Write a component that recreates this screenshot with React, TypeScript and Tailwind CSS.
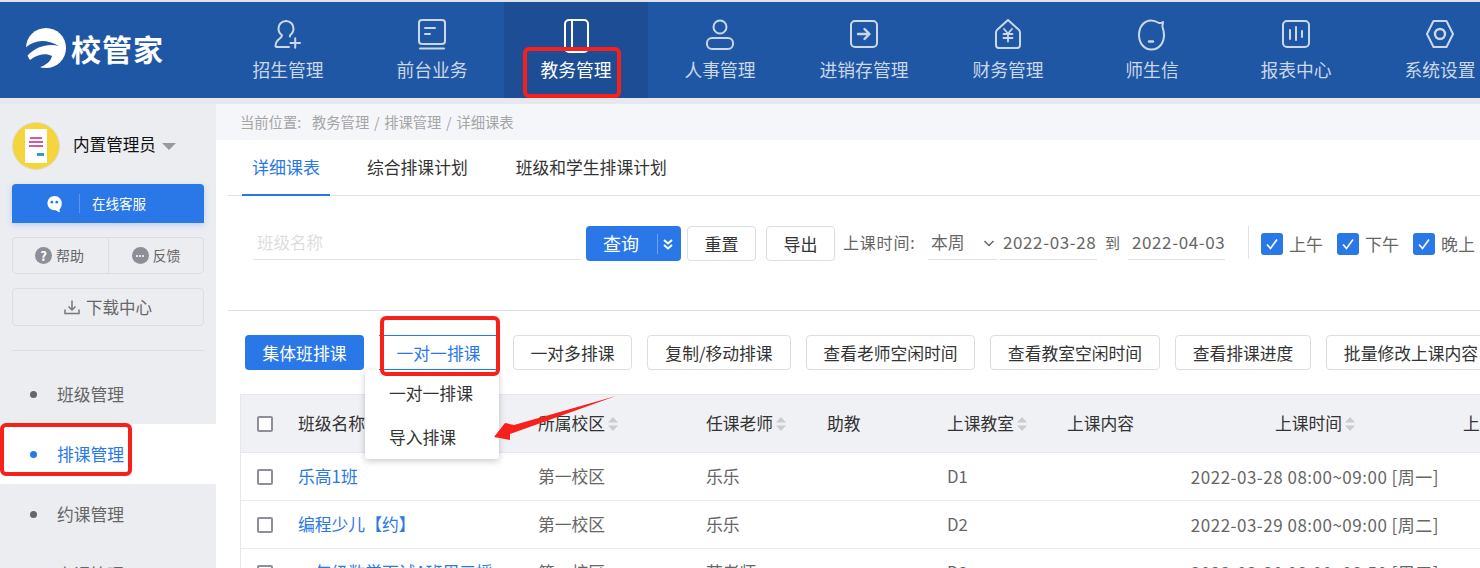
import React from "react";

const FONT = "[font-family:'Noto_Sans_CJK_SC','Noto_Sans',sans-serif]";

const stroke = { fill: "none", stroke: "currentColor", strokeWidth: 2, strokeLinecap: "round" as const, strokeLinejoin: "round" as const };

function NavIcon({ k }: { k: string }) {
  const body: Record<string, React.ReactNode> = {
    enroll: (
      <>
        <path d="M14 3c4.500 0 7.500 3.400 7.500 7.500 0 3-1.500 5.300-3.500 6.800v1.200" />
        <path d="M14 3c-4.500 0-7.500 3.400-7.500 7.500 0 3.300 1.700 5.500 3.500 6.800 0 2-2 2.700-4 4.700-1.300 1.300-2.500 3-2.500 5.500 0 1 .5 1.500 1.500 1.500H17" />
        <path d="M18.500 25h9.500M23.200 20.300v9.500" />
      </>
    ),
    front: (
      <>
        <rect x="3" y="2" width="26" height="24" rx="3" />
        <path d="M9 10h10M9 16h5M4 30.500h24" />
      </>
    ),
    edu: (
      <>
        <rect x="5" y="2" width="23" height="32" rx="4" />
        <path d="M12 2v32" />
      </>
    ),
    hr: (
      <>
        <circle cx="16" cy="9" r="6.500" />
        <rect x="3" y="20" width="26" height="11" rx="5" />
      </>
    ),
    stock: (
      <>
        <rect x="3" y="3" width="26" height="26" rx="4" />
        <path d="M10 16h11M16.500 11l5 5-5 5" strokeWidth="2.400" />
      </>
    ),
    money: (
      <>
        <path d="M16 2l10.500 9.500c1 .9 1.500 1.800 1.500 3v12.500c0 2-1.500 3-3 3H7c-1.500 0-3-1-3-3V14.500c0-1.200.5-2.100 1.500-3z" />
        <path d="M12 11l4 4.500 4-4.500M11.500 16h9M11.500 20h9M16 15.500v8" strokeWidth="1.800" />
      </>
    ),
    msg: (
      <>
        <path d="M15 2.500C8 2.500 3 9 3 17s5 14.500 12.500 14.500S28 25 28 17c0-3-.6-5.500-1.500-8-.3-2 .5-3.500.5-5-1.500 1-2.500 1.400-4 1C20.500 3.500 18 2.500 15 2.500z" />
        <path d="M13 23.500h4" strokeWidth="2.400" />
      </>
    ),
    report: (
      <>
        <rect x="3" y="3" width="26" height="26" rx="4" />
        <path d="M10 12v9M16 9v13M22 13v6" />
      </>
    ),
    sys: (
      <>
        <path d="M9.500 3h13L29 16l-6.500 13h-13L3 16z" />
        <circle cx="16" cy="16" r="5" strokeWidth="2.400" />
      </>
    ),
  };
  return (
    <svg viewBox="0 0 32 36" className="w-8 h-9" {...stroke}>
      {body[k]}
    </svg>
  );
}

const nav = [
  ["enroll", "招生管理"],
  ["front", "前台业务"],
  ["edu", "教务管理"],
  ["hr", "人事管理"],
  ["stock", "进销存管理"],
  ["money", "财务管理"],
  ["msg", "师生信"],
  ["report", "报表中心"],
  ["sys", "系统设置"],
];

function Sort() {
  return (
    <svg viewBox="0 0 10 14" className="w-[10px] h-[14px] ml-[3px] shrink-0" fill="#c9cbd1">
      <path d="M5 0l5 5.500H0zM5 14L0 8.500h10z" />
    </svg>
  );
}

function Box() {
  return <span className="block w-4 h-4 border-2 border-[#8e8e9c] rounded-[2px] bg-white" />;
}

function Check({ label }: { label: string }) {
  return (
    <label className="flex items-center gap-[6px] text-[17px] text-[#666]">
      <span className="w-[22px] h-[22px] rounded-[3px] bg-[#2a78e8] flex items-center justify-center">
        <svg viewBox="0 0 16 16" className="w-4 h-4" fill="none" stroke="#fff" strokeWidth="1.600">
          <path d="M3 8.500l3.500 4L13 3.500" />
        </svg>
      </span>
      {label}
    </label>
  );
}

const tools = [
  ["一对多排课", "w-[119px]"],
  ["复制/移动排课", "w-[144px]"],
  ["查看老师空闲时间", "w-[169px]"],
  ["查看教室空闲时间", "w-[170px]"],
  ["查看排课进度", "w-[136px]"],
  ["批量修改上课内容", "w-[170px]"],
];

const GRID = "grid grid-cols-[57px_240px_168px_121px_120px_120px_110px_276px_120px] items-center w-[1332px]";

const rows = [
  ["乐高1班", "第一校区", "乐乐", "D1", "2022-03-28 08:00~09:00 [周一]"],
  ["编程少儿【约】", "第一校区", "乐乐", "D2", "2022-03-29 08:00~09:00 [周二]"],
  ["一年级数学面试A班周三授", "第一校区", "苏老师", "D3", "2022-03-30 08:00~08:50 [周三]"],
];

function RedBox({ className }: { className: string }) {
  return <div className={`absolute border-4 border-[#f8201b] rounded-[6px] pointer-events-none ${className}`} />;
}

export default function App() {
  return (
    <div className={`relative w-[1480px] h-[568px] overflow-hidden bg-[#e6e8ee] ${FONT}`}>
      <div className="h-[2px] bg-[#dfe2e8]" />
      <header className="h-[96px] bg-[#1f57a4] flex overflow-hidden">
        <div className="w-[216px] shrink-0 flex items-center pl-[26px] gap-[5px] pb-[4px]">
          <svg viewBox="0 0 40 40" className="w-[40px] h-[40px] shrink-0">
            <circle cx="20" cy="20" r="20" fill="#fff" />
            <path d="M-1 20C8 12 19 10 33 18 22 15.500 11 18 1 28z" fill="#1f57a4" />
            <path d="M-1 41L0 36C8 27 18 24 26 28 25 33 20 37 14 39L6 41z" fill="#1f57a4" />
          </svg>
          <span className="text-[30px] leading-none font-bold text-white tracking-[1px]">校管家</span>
        </div>
        {nav.map(([k, label]) => {
          const active = label === "教务管理";
          return (
            <div
              key={label}
              className={`w-36 shrink-0 flex flex-col items-center pt-[16px] ${active ? "bg-[#1d4d94] text-white" : "text-[#cbd8ea]"}`}
            >
              <NavIcon k={k} />
              <span className="mt-[2px] text-[17.800px] leading-[26px] whitespace-nowrap">{label}</span>
            </div>
          );
        })}
      </header>
      <div className="h-[6px] bg-[#e6e8ee]" />
      <div className="flex h-[464px]">
        <aside className="w-[216px] shrink-0 bg-[#ecedf1] flex flex-col">
          <div className="px-3 pt-[18px]">
            <div className="flex items-center">
              <div className="w-12 h-12 rounded-full bg-[#f4d63c] border border-[#dcdcdc] flex items-center justify-center overflow-hidden">
                <div className="w-[22px] h-[34px] bg-white flex flex-col items-center justify-center gap-[2px]">
                  <span className="block w-3 h-[2px] bg-[#d45a9a]" />
                  <span className="block w-[14px] h-[2px] bg-[#d45a9a]" />
                  <span className="block w-[14px] h-[2px] bg-[#d45a9a]" />
                  <span className="block w-[7px] h-[3px] mt-[4px] ml-2 bg-[#2d9fc0]" />
                </div>
              </div>
              <span className="ml-[13px] mb-[4px] text-[16.600px] text-[#111] whitespace-nowrap">内置管理员</span>
              <span className="ml-[6px] w-0 h-0 border-x-[7px] border-x-transparent border-t-[7px] border-t-[#999]" />
            </div>
            <div className="mt-[14px] h-[39px] bg-[#2a78e8] rounded-t-[4px] shadow-[0_2px_6px_rgba(42,120,232,0.25)] flex items-center text-white">
              <svg viewBox="0 0 20 20" className="ml-[34px] w-[18px] h-[18px]" fill="#fff">
                <path d="M9.500 1a8 8 0 0 0 0 16c1.800 0 3 .7 4.500 2 .5.300 1.500.3 1.500-.5 0-1-.8-1.300-.5-2.500 1.500-1.500 2.500-3.500 2.500-6.500a8 8 0 0 0-8-8.500z" />
                <circle cx="6.500" cy="8" r="1.500" fill="#2a78e8" />
                <circle cx="12" cy="8" r="1.500" fill="#2a78e8" />
              </svg>
              <span className="ml-[15px] w-px h-[19px] bg-[#5b97ee]" />
              <span className="ml-[12px] text-[13.500px]">在线客服</span>
            </div>
            <div className="mt-[14px] h-[37px] border border-[#dcdde3] rounded-[4px] flex text-[14px] text-[#666]">
              <div className="w-[96px] border-r border-[#dcdde3] flex items-center justify-center gap-[4px] pr-[2px]">
                <span className="w-[17px] h-[17px] rounded-full bg-[#8e8e96] text-white text-[13px] leading-[17px] font-bold text-center">?</span>
                帮助
              </div>
              <div className="flex-1 flex items-center justify-center gap-[4px]">
                <span className="w-[17px] h-[17px] rounded-full bg-[#8e8e96] flex items-center justify-center gap-px">
                  <i className="block w-[2px] h-[2px] rounded-full bg-white" />
                  <i className="block w-[2px] h-[2px] rounded-full bg-white" />
                  <i className="block w-[2px] h-[2px] rounded-full bg-white" />
                </span>
                反馈
              </div>
            </div>
            <div className="mt-[14px] h-[38px] border border-[#dcdde3] rounded-[4px] flex items-center justify-center gap-[6px] text-[16.500px] text-[#666]">
              <svg viewBox="0 0 16 16" className="w-4 h-4" fill="none" stroke="#777" strokeWidth="1.500">
                <path d="M8 1.500v9M4.500 7.500L8 11l3.500-3.500M1 10.500v4h14v-4" />
              </svg>
              下载中心
            </div>
            <div className="mt-[24px] h-px bg-[#dcdde3]" />
          </div>
          <nav className="mt-[13px] text-[16.800px]">
            {["班级管理", "排课管理", "约课管理", "上课管理"].map((m) => {
              const on = m === "排课管理";
              return (
                <div key={m} className={`h-[60px] flex items-center pl-[30px] ${on ? "bg-white text-[#2a78e8]" : "text-[#666]"}`}>
                  <span className={`w-[7px] h-[7px] rounded-full ${on ? "bg-[#2a78e8]" : "bg-[#666]"}`} />
                  <span className="ml-[20px] mt-[2px]">{m}</span>
                </div>
              );
            })}
          </nav>
        </aside>

        <main className="flex-1 min-w-0 flex flex-col">
          <div className="h-[36px] shrink-0 bg-[#f5f6fa] pl-[24px] flex items-center text-[14.300px] text-[#a5a5a5] pb-[1px] [word-spacing:1.500px] whitespace-nowrap">
            <span className="w-[72px]">当前位置:</span>
            <span>教务管理 / 排课管理 / 详细课表</span>
          </div>
          <div className="flex-1 bg-white pl-[12px] overflow-hidden">
            <div className="h-[56px] border-b border-[#dfe1e8] flex text-[16.800px] text-[#333]">
              <div className="ml-[14px] w-[88px] border-b-2 border-[#2a78e8] h-[56px] text-[#2a78e8] flex items-center justify-center text-[17px] whitespace-nowrap">详细课表</div>
              <div className="ml-[37px] flex items-center h-[56px] whitespace-nowrap">综合排课计划</div>
              <div className="ml-[48px] flex items-center h-[56px] whitespace-nowrap">班级和学生排课计划</div>
            </div>
            <div className="h-[115px] border-b border-[#dfe1e8]">
              <div className="pt-[30px] pl-[25px] flex items-start text-[17px] whitespace-nowrap">
                <div className="w-[329px] h-[34px] border-b border-[#dfe1e8] rounded-b-[3px] text-[#dedede] leading-[33px] pl-[4px] text-[16.500px]">班级名称</div>
                <div className="ml-[4px] w-[95px] h-[35px] bg-[#2a78e8] rounded-[4px] text-white flex items-center">
                  <span className="ml-[17px] text-[18px]">查询</span>
                  <span className="ml-[18px] w-px h-[20px] bg-[#6aa0ee]" />
                  <svg viewBox="0 0 12 12" className="ml-[4px] w-3 h-3" fill="none" stroke="#fff" strokeWidth="2">
                    <path d="M2 2l4 3.500L10 2M2 7l4 3.500L10 7" />
                  </svg>
                </div>
                <div className="ml-[6px] w-[69px] h-[35px] border border-[#dcdee6] rounded-[4px] flex items-center justify-center text-[#333]">重置</div>
                <div className="ml-[10px] w-[69px] h-[35px] border border-[#dcdee6] rounded-[4px] flex items-center justify-center text-[#333]">导出</div>
                <span className="ml-[8px] w-[85px] h-[33px] leading-[33px] text-[16px] text-[#666] tracking-[0.800px]">上课时间:</span>
                <div className="w-[69px] h-[34px] border-b border-[#dfe1e8] flex items-center text-[#666] pl-[3px] text-[16.800px]">
                  本周
                  <svg viewBox="0 0 12 12" className="ml-auto mr-[2px] w-3 h-3" fill="none" stroke="#666" strokeWidth="1.500">
                    <path d="M1.500 4l4.500 4.500L10.500 4" />
                  </svg>
                </div>
                <div className="ml-[3px] w-[97px] h-[34px] border-b border-[#dfe1e8] text-[#666] leading-[32px] pl-[3px] text-[17px] tracking-[0.600px]">2022-03-28</div>
                <span className="w-[31px] text-center leading-[34px] text-[15px] text-[#666]">到</span>
                <div className="w-[97px] h-[34px] border-b border-[#dfe1e8] text-[#666] leading-[32px] pl-[4px] text-[17px] tracking-[0.600px]">2022-04-03</div>
                <span className="ml-[23px] w-px h-[33px] bg-[#dfe1e8]" />
                <div className="ml-[12px] mt-[5px] flex gap-[14px]">
                  <Check label="上午" />
                  <Check label="下午" />
                  <Check label="晚上" />
                </div>
              </div>
            </div>
            <div className="mt-[24px] ml-[17px] flex gap-[15px] text-[16.800px] whitespace-nowrap">
              <div className="w-[119px] h-[35px] pt-[2px] shrink-0 bg-[#2a78e8] rounded-[4px] text-white flex items-center justify-center">集体班排课</div>
              <div className="w-[119px] h-[35px] pt-[2px] shrink-0 border-y border-[#2a78e8] text-[#2a78e8] flex items-center justify-center">一对一排课</div>
              {tools.map(([t, w]) => (
                <div key={t} className={`${w} h-[35px] pt-[2px] shrink-0 border border-[#dcdee6] rounded-[4px] text-[#333] flex items-center justify-center`}>{t}</div>
              ))}
            </div>
            <div className="mt-[24px] ml-[12px] w-[1333px] border-l border-[#e6e8ee] text-[16.800px] whitespace-nowrap">
              <div className={`${GRID} h-[59px] bg-[#f0f1f5] border-y border-[#e6e8ee] text-[#333]`}>
                <span className="pl-[16px]"><Box /></span>
                <span className="flex items-center">班级名称<Sort /></span>
                <span className="flex items-center">所属校区<Sort /></span>
                <span className="flex items-center">任课老师<Sort /></span>
                <span>助教</span>
                <span className="flex items-center">上课教室<Sort /></span>
                <span>上课内容</span>
                <span className="flex items-center justify-center">上课时间<Sort /></span>
                <span className="pl-[10px]">上课状态</span>
              </div>
              {rows.map((r) => (
                <div key={r[0]} className={`${GRID} h-[48px] border-b border-[#e6e8ee] text-[#666]`}>
                  <span className="pl-[16px]"><Box /></span>
                  <span className="text-[#2a78e8]">{r[0]}</span>
                  <span>{r[1]}</span>
                  <span>{r[2]}</span>
                  <span />
                  <span>{r[3]}</span>
                  <span />
                  <span className="text-center text-[17px] tracking-[0.500px]">{r[4]}</span>
                  <span />
                </div>
              ))}
            </div>
          </div>
        </main>
      </div>

      <div className="absolute left-[365px] top-[370px] w-[134px] h-[89px] bg-white rounded-b-[3px] shadow-[0_2px_6px_rgba(0,0,0,0.22)] pl-[24px] text-[16.800px] text-[#333] flex flex-col">
        <div className="h-[48px] flex items-center">一对一排课</div>
        <div className="h-[40px] flex items-center">导入排课</div>
      </div>

      <RedBox className="left-[523px] top-[47px] w-[98px] h-[51px]" />
      <RedBox className="left-[380px] top-[316px] w-[120px] h-[60px]" />
      <RedBox className="left-0 top-[423px] w-[132px] h-[53px]" />
      <svg viewBox="0 0 125 48" className="absolute left-[492px] top-[395px] w-[125px] h-[48px]" fill="#f8201b">
        <path d="M124 1L22 30 13 28 2 42 18 45 18 39z" />
      </svg>
    </div>
  );
}
